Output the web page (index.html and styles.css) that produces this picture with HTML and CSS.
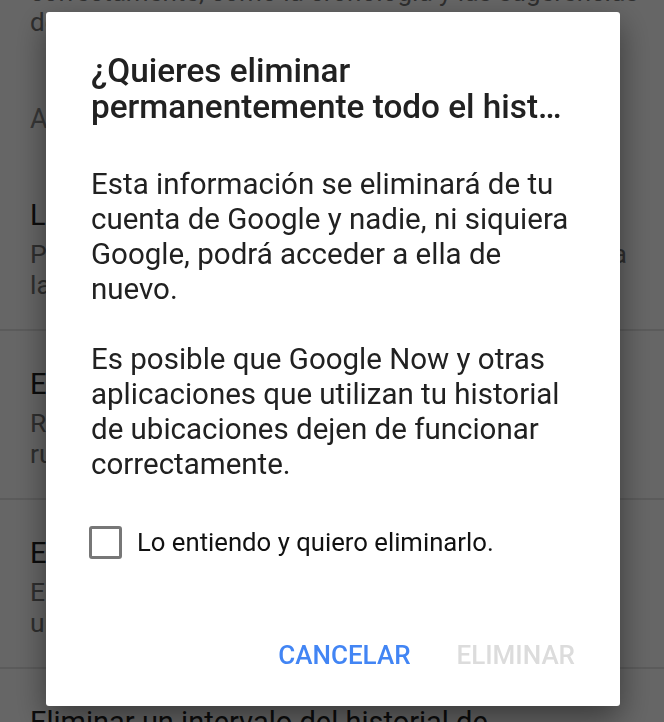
FILE: index.html
```html
<!DOCTYPE html>
<html lang="es">
<head>
  <meta charset="UTF-8">
  <title>Historial de ubicaciones</title>
  <meta name="viewport" content="width=device-width, initial-scale=1.0">
  <link rel="stylesheet" href="styles.css">
</head>
<body>

  <!-- Ajustes (pantalla de fondo, desplazada) -->
  <div class="screen">
    <div class="settings">
      <p class="intro">correctamente, como la cronología y las sugerencias<br>de lugares que visitas.</p>

      <h2 class="section">Ajustes de la cuenta</h2>

      <div class="item">
        <div class="item-title">Los informes de ubicación están activados</div>
        <div class="item-sub">Permite que Google guarde a menudo en tu cuenta<br>la ubicación de este dispositivo.</div>
      </div>

      <div class="item">
        <div class="item-title">El historial de ubicaciones está activado</div>
        <div class="item-sub">Recuerda los sitios que visitas y las<br>rutas que sigues con tus dispositivos.</div>
      </div>

      <div class="item">
        <div class="item-title">Eliminar todo el historial de ubicaciones</div>
        <div class="item-sub">Elimina de forma permanente todas tus<br>ubicaciones guardadas en la cuenta.</div>
      </div>

      <div class="item last">
        <div class="item-title">Eliminar un intervalo del historial de</div>
        <div class="item-title">ubicaciones</div>
      </div>
    </div>
  </div>

  <div class="scrim"></div>

  <!-- Diálogo de confirmación -->
  <div class="dialog" role="dialog">
    <h1 class="dialog-title">¿Quieres eliminar permanentemente todo el hist…</h1>

    <div class="dialog-body">
      <p>Esta información se eliminará de tu cuenta de Google y nadie, ni siquiera Google, podrá acceder a ella de nuevo.</p>
      <p>Es posible que Google Now y otras aplicaciones que utilizan tu historial de ubicaciones dejen de funcionar correctamente.</p>
    </div>

    <label class="confirm">
      <input type="checkbox" id="confirm-box">
      <span class="box"></span>
      <span>Lo entiendo y quiero eliminarlo.</span>
    </label>

    <div class="actions">
      <button class="btn primary">Cancelar</button>
      <button class="btn" id="delete-btn" disabled>Eliminar</button>
    </div>
  </div>

  <script>
    const box = document.getElementById('confirm-box');
    const del = document.getElementById('delete-btn');

    // Solo se puede eliminar tras marcar la casilla
    box.addEventListener('change', () => {
      del.disabled = !box.checked;
    });
  </script>

</body>
</html>
```

FILE: styles.css
```css
* {
  margin: 0;
  padding: 0;
  box-sizing: border-box;
}

body, html {
  height: 100%;
  font-family: Roboto, "Noto Sans", sans-serif;
  overflow: hidden;
  background: #fff;
}

/* pantalla de ajustes detrás del diálogo */
.screen {
  height: 100%;
  overflow: hidden;
}

.settings {
  margin-top: -23px;
}

.intro {
  padding: 0 20px 0 30px;
  font-size: 26px;
  line-height: 30px;
  color: #757575;
  white-space: nowrap;
}

.section {
  margin: 64px 0 25px;
  padding: 0 30px;
  font-size: 27px;
  font-weight: 400;
  line-height: 36px;
  color: #8a8a8a;
}

.item {
  padding: 35px 20px 29px 30px;
  border-bottom: 2px solid #e4e4e4;
}

.item.last {
  border-bottom: none;
}

.item-title {
  font-size: 29px;
  line-height: 36px;
  color: #212121;
  white-space: nowrap;
}

.item-sub {
  margin-top: 5px;
  font-size: 26.5px;
  line-height: 31px;
  color: #757575;
  white-space: nowrap;
}

.scrim {
  position: fixed;
  top: 0; left: 0;
  width: 100%;
  height: 100%;
  background: rgba(0,0,0,0.6);
}

/* diálogo */
.dialog {
  position: fixed;
  top: 12px;
  left: 46px;
  width: 574px;
  height: 694px;
  padding: 41px 45px 33px;
  background: #fff;
  border-radius: 3px;
  box-shadow: 0 12px 32px rgba(0,0,0,0.45);
  display: flex;
  flex-direction: column;
}

.dialog-title {
  font-size: 33.3px;
  font-weight: 500;
  line-height: 36px;
  color: #212121;
}

.dialog-body {
  margin-top: 42px;
  display: flex;
  flex-direction: column;
  gap: 35px;
}

.dialog-body p {
  font-size: 29.5px;
  line-height: 35px;
  color: #212121;
}

.confirm {
  margin-top: 42px;
  margin-left: -2px;
  display: flex;
  align-items: center;
  gap: 15px;
  font-size: 25.7px;
  line-height: 36px;
  color: #111;
  cursor: pointer;
}

.confirm input {
  display: none;
}

.box {
  width: 33px;
  height: 33px;
  border: 3px solid #777;
  border-radius: 3px;
  flex-shrink: 0;
}

.confirm input:checked + .box {
  background: #4285f4;
  border-color: #4285f4;
}

.actions {
  margin-top: auto;
  display: flex;
  justify-content: flex-end;
  gap: 46px;
}

.btn {
  padding: 0;
  border: none;
  background: none;
  font-family: inherit;
  font-size: 26px;
  font-weight: 500;
  line-height: 36px;
  text-transform: uppercase;
  color: #4285f4;
  cursor: pointer;
}

.btn:disabled {
  color: #dcdcdc;
  cursor: default;
}
```
